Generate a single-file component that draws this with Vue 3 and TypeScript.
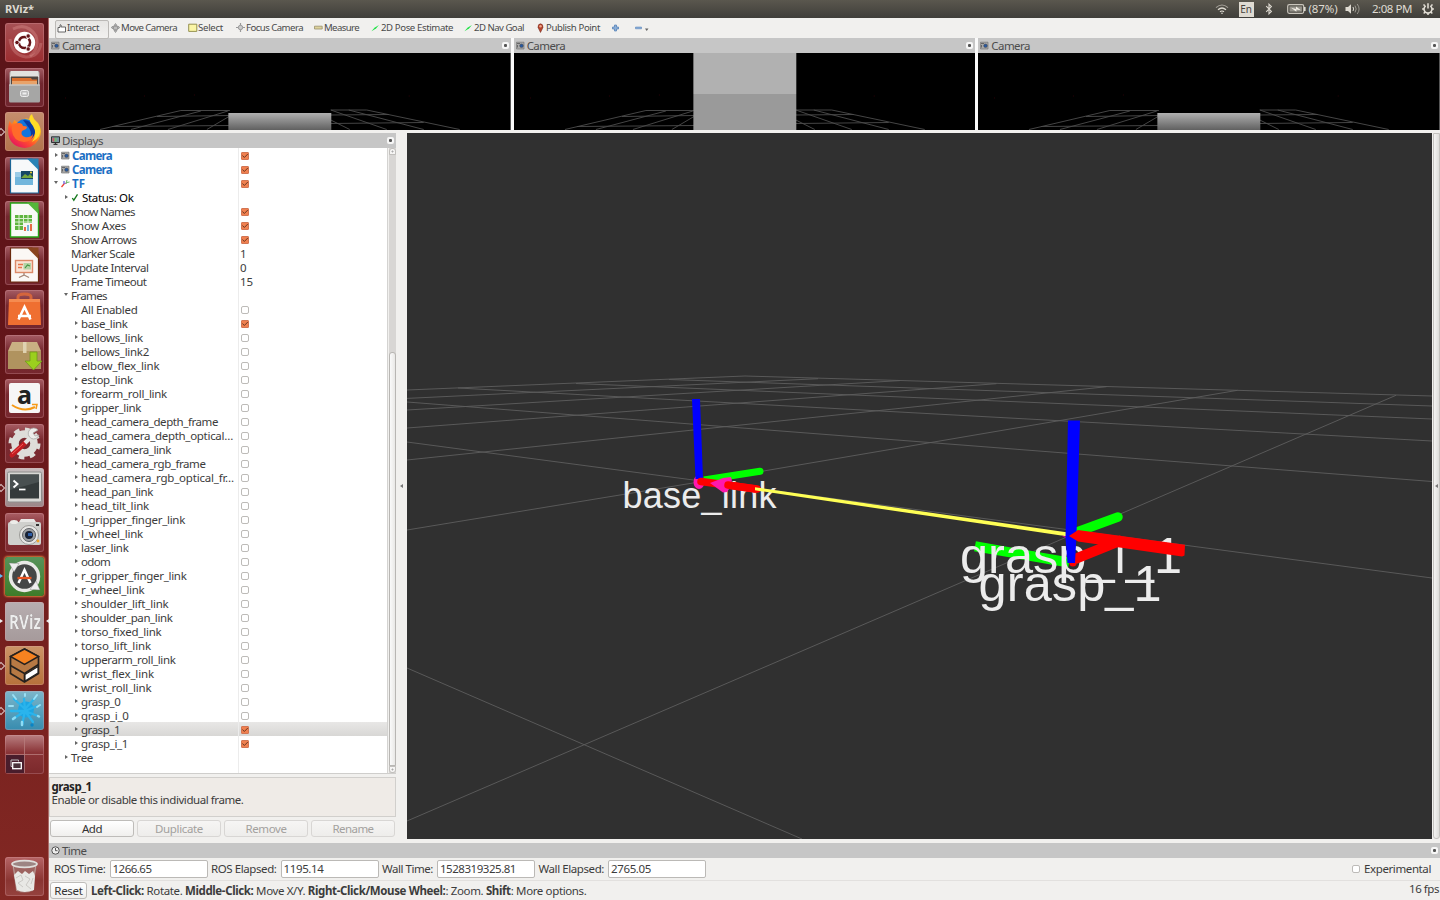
<script setup lang="ts">
interface Tool {
  icon: string
  label: string
  text: number
  slot: number
}

interface Row {
  label: string
  width: number
  depth: number
  arrow?: 'open' | 'closed'
  check?: boolean
  value?: string
  icon?: 'camera' | 'tf' | 'ok'
  kind?: string
}

/* Spreads the letters of a label so that it fills the given width. */
const vFit = {
  mounted(el: HTMLElement, binding: { value: number }) {
    const natural = el.getBoundingClientRect().width
    const count = (el.textContent ?? '').length
    if (count > 0) {
      el.style.letterSpacing = `${((binding.value - natural) / count).toFixed(3)}px`
    }
  },
}

const tools: Tool[] = [
  { icon: 'hand', label: 'Interact', text: 32, slot: 56 },
  { icon: 'move', label: 'Move Camera', text: 56, slot: 77 },
  { icon: 'select', label: 'Select', text: 25, slot: 48 },
  { icon: 'focus', label: 'Focus Camera', text: 57, slot: 78 },
  { icon: 'measure', label: 'Measure', text: 35, slot: 57 },
  { icon: 'arrow', label: '2D Pose Estimate', text: 72, slot: 93 },
  { icon: 'arrow', label: '2D Nav Goal', text: 50, slot: 72 },
  { icon: 'pin', label: 'Publish Point', text: 54, slot: 75 },
]

const frame = (label: string, right: number, check = false): Row => ({
  label,
  width: right - 81,
  depth: 2,
  arrow: 'closed',
  check,
})

const rows: Row[] = [
  { label: 'Camera', width: 40, depth: 0, arrow: 'closed', icon: 'camera', check: true, kind: 'display' },
  { label: 'Camera', width: 40, depth: 0, arrow: 'closed', icon: 'camera', check: true, kind: 'display' },
  { label: 'TF', width: 13, depth: 0, arrow: 'open', icon: 'tf', check: true, kind: 'display' },
  { label: 'Status: Ok', width: 51.5, depth: 1, arrow: 'closed', icon: 'ok', kind: 'ok-row' },
  { label: 'Show Names', width: 64, depth: 1, check: true },
  { label: 'Show Axes', width: 55, depth: 1, check: true },
  { label: 'Show Arrows', width: 65.5, depth: 1, check: true },
  { label: 'Marker Scale', width: 63.5, depth: 1, value: '1' },
  { label: 'Update Interval', width: 77.5, depth: 1, value: '0' },
  { label: 'Frame Timeout', width: 75.5, depth: 1, value: '15' },
  { label: 'Frames', width: 36, depth: 1, arrow: 'open' },
  { label: 'All Enabled', width: 56.5, depth: 2, check: false },
  frame('base_link', 127.5, true),
  frame('bellows_link', 143),
  frame('bellows_link2', 149),
  frame('elbow_flex_link', 159.5),
  frame('estop_link', 133),
  frame('forearm_roll_link', 167),
  frame('gripper_link', 141),
  frame('head_camera_depth_frame', 218),
  frame('head_camera_depth_optical…', 233),
  frame('head_camera_link', 171),
  frame('head_camera_rgb_frame', 205.5),
  frame('head_camera_rgb_optical_fr…', 234),
  frame('head_pan_link', 153),
  frame('head_tilt_link', 149),
  frame('l_gripper_finger_link', 185),
  frame('l_wheel_link', 143),
  frame('laser_link', 128.5),
  frame('odom', 110),
  frame('r_gripper_finger_link', 186.5),
  frame('r_wheel_link', 144.5),
  frame('shoulder_lift_link', 168.5),
  frame('shoulder_pan_link', 172.5),
  frame('torso_fixed_link', 161.5),
  frame('torso_lift_link', 151),
  frame('upperarm_roll_link', 175.5),
  frame('wrist_flex_link', 154),
  frame('wrist_roll_link', 151.5),
  frame('grasp_0', 120.5),
  frame('grasp_i_0', 128.5),
  { ...frame('grasp_1', 120, true), kind: 'selected' },
  frame('grasp_i_1', 128, true),
  { label: 'Tree', width: 22, depth: 1, arrow: 'closed' },
]

const gridLines: number[][] = [
  [407, 668, 802, 839],
  [407, 442, 1432, 578],
  [407, 402, 1432, 481.5],
  [458, 388, 1432, 441],
  [576, 383.5, 1432, 419],
  [669, 379.5, 1432, 406],
  [745, 376, 1432, 396],
  [407, 390, 745, 376],
  [407, 398.4, 818, 378.7],
  [407, 410, 900, 380.6],
  [407, 428, 996.4, 383.7],
  [407, 460, 1106.6, 386.7],
  [407, 530, 699, 482],
  [699, 482, 1237.5, 390.3],
  [407, 821, 1396, 395.3],
]

const floorLines: number[][] = [
  [51, 76.5, 132, 57.5],
  [82, 76.5, 152, 58],
  [119, 76.5, 179, 58],
  [158, 76.5, 181, 63],
  [132, 57.5, 181, 57.5],
  [108, 63.5, 181, 62.5],
  [63, 73.5, 181, 72.5],
  [282, 57, 318, 57],
  [318, 57, 411, 76.5],
  [300, 57, 375, 76.5],
  [282, 57, 338, 76.5],
  [282, 67, 301, 76.5],
  [282, 62, 340, 61.5],
  [282, 70.5, 375, 69.5],
]

const cameras = ['low', 'tall', 'low']

const clocks = [
  { label: 'ROS Time:', text: 51.5, value: '1266.65', digits: 39 },
  { label: 'ROS Elapsed:', text: 65.5, value: '1195.14', digits: 40 },
  { label: 'Wall Time:', text: 51, value: '1528319325.81', digits: 76 },
  { label: 'Wall Elapsed:', text: 65.5, value: '2765.05', digits: 40 },
]

const buttons = [
  { label: 'Add', text: 20, enabled: true },
  { label: 'Duplicate', text: 48, enabled: false },
  { label: 'Remove', text: 41, enabled: false },
  { label: 'Rename', text: 41, enabled: false },
]
</script>

<template>
  <div class="desktop">
    <header class="panel">
      <span v-fit="29" class="app-name">RViz*</span>
      <div class="indicators">
        <svg class="wifi" width="14" height="12" viewBox="0 0 14 12" fill="none" stroke="#dfdbd2" stroke-width="1.2">
          <path d="M1 4.6Q7 -.6 13 4.6" opacity=".6" /><path d="M3 6.8Q7 3.2 11 6.8" /><path d="M5 8.8Q7 7.2 9 8.8" />
          <circle cx="7" cy="10.2" r=".8" fill="#dfdbd2" stroke="none" />
        </svg>
        <span class="lang">En</span>
        <svg class="bt" width="8" height="12" viewBox="0 0 8 12" fill="none" stroke="#dfdbd2" stroke-width="1.1">
          <path d="M1.2 3.2L6.4 8.4L4 10.8V1.2L6.4 3.6L1.2 8.8" />
        </svg>
        <svg class="battery" width="19" height="10" viewBox="0 0 19 10">
          <rect x=".7" y=".7" width="16" height="8.6" rx="1.5" fill="none" stroke="#c9c5bc" stroke-width="1.2" />
          <rect x="17" y="3" width="1.6" height="4" fill="#dfdbd2" />
          <rect x="2.5" y="2.4" width="12.4" height="5.2" fill="#96938b" />
          <path d="M4 3.8L9 5V2.4L13.8 6.2L9.4 5.6V7.8Z" fill="#f3efe6" />
        </svg>
        <span v-fit="29" class="pct">(87%)</span>
        <svg class="sound" width="16" height="12" viewBox="0 0 16 12" fill="none" stroke="#dfdbd2">
          <path d="M.5 4H3L6 1.2V10.8L3 8H.5Z" fill="#dfdbd2" stroke="none" />
          <path d="M8 4Q9.2 6 8 8" /><path d="M10 2.6Q12.4 6 10 9.4" opacity=".55" /><path d="M12.2 1Q16 6 12.2 11" opacity=".5" />
        </svg>
        <span v-fit="40" class="time">2:08 PM</span>
        <svg class="gear" width="12" height="12" viewBox="0 0 12 12" fill="none" stroke="#e6e2d9">
          <path d="M3.7 2.8A4 4 0 1 0 8.3 2.8" stroke-width="1.5" />
          <path d="M6 .2V5.4" stroke-width="1.5" />
          <path d="M2.8 2.8L1.5 1.5M9.2 2.8L10.5 1.5M2 6H.1M10 6H11.9M3 9L1.7 10.4M9 9L10.3 10.4M6 10V12" stroke-width="1.5" />
        </svg>
      </div>
    </header>

    <div class="body">
      <nav class="launcher">
        <div class="tile ubuntu">
          <svg viewBox="0 0 39 39">
            <path d="M8 6Q22 -1 31 13Q35 25 25 33" fill="none" stroke="#e39a98" stroke-width="3" opacity=".35" />
            <path d="M5 16Q7 32 21 34Q34 34 36 20" fill="none" stroke="#e6a3a0" stroke-width="3" opacity=".3" />
            <circle cx="19.500" cy="19.500" r="10.700" fill="#fff" />
            <circle cx="19.500" cy="19.500" r="5.600" fill="none" stroke="#651519" stroke-width="2.500" stroke-dasharray="10.200 1.530" stroke-dashoffset="5.100" />
            <g fill="#651519" stroke="#fff" stroke-width=".8"><circle cx="12" cy="19.500" r="2.200" /><circle cx="23.200" cy="13" r="2.200" /><circle cx="23.200" cy="26" r="2.200" /></g>
          </svg>
        </div>
        <div class="tile">
          <svg viewBox="0 0 39 39">
            <rect x="4.500" y="3" width="30" height="31" rx="2" fill="#b8b8b6" />
            <path d="M6 3H33L34 9H5Z" fill="#e2e2df" />
            <rect x="6" y="8.500" width="27" height="9" fill="#4e4641" />
            <path d="M7 10H26L27 11.500H32V17H7Z" fill="#db6f2d" /><path d="M7 13H32V17H7Z" fill="#e8a36a" />
            <rect x="4" y="16.500" width="31" height="18" rx="1.500" fill="#a6a6a5" /><path d="M4 17H35" stroke="#d5d5d3" />
            <rect x="15.500" y="22.500" width="8" height="6" rx="1.800" fill="#bbb" stroke="#eee" /><rect x="17.500" y="24.500" width="4" height="2" fill="#eee" />
          </svg>
        </div>
        <div class="tile firefox pips">
          <svg viewBox="0 0 39 39">
            <defs><linearGradient id="fox" x1=".85" y1=".05" x2=".2" y2=".95"><stop offset="0" stop-color="#ffe629" /><stop offset=".4" stop-color="#ffa315" /><stop offset=".7" stop-color="#ff4a30" /><stop offset="1" stop-color="#e3155f" /></linearGradient></defs>
            <path d="M4.500 9L7 12L9.500 8L13 11Q20 5 24 7Q24 4 27 2Q28 7 33 11Q37 17 35.500 23Q32 35 20 36Q6 35 3.500 23Q2.500 15 4.500 9Z" fill="url(#fox)" />
            <circle cx="20" cy="17" r="10" fill="#1275dc" />
            <path d="M18 8Q27 8 30 17Q31 25 24 28Q28 22 24 16Z" fill="#0a3aa2" />
            <path d="M9 12Q17 9 18 14Q24 14 21 17L17 19Q15 23 20 25Q25 26 28 22Q28 29 19 30Q8 29 7 19Q6 14 9 12Z" fill="#ff6a2a" />
            <path d="M26 3Q23 9 28 14Q33 22 27 30Q37 25 35 16Q33 10 28 7Z" fill="#ffdc26" />
          </svg>
        </div>
        <div class="tile">
          <svg viewBox="0 0 39 39">
            <path d="M5.500 2H27L33.500 9V36H5.500Z" fill="#f7f9fa" stroke="#1b6596" stroke-width="1.200" /><path d="M22 1.500H33.500V13Z" fill="#2a83b6" />
            <path d="M10 15H28V28H10Z" fill="#72b6dc" /><path d="M10 15H20V20H10Z" fill="#9ccce7" /><rect x="16" y="14" width="12" height="8" fill="#164765" /><path d="M16 21L20 17L23 19L25 17L28 20V21Z" fill="#75a63c" /><circle cx="26" cy="15.500" r="1" fill="#f5d22e" />
          </svg>
        </div>
        <div class="tile">
          <svg viewBox="0 0 39 39">
            <path d="M5.500 2H27L33.500 9V36H5.500Z" fill="#f8faf6" stroke="#26a316" stroke-width="1.400" /><path d="M22 1.500H33.500V13Z" fill="#55b63a" />
            <path d="M10 14H27V29H10Z" fill="#5fb53f" /><path d="M10 17.500H27M10 21H27M10 24.500H27M14 14V29M18.500 14V29M23 14V29" stroke="#dbf0d3" />
            <rect x="18" y="22" width="11" height="8" fill="#f4f6f1" /><path d="M19 30V26H21V30ZM25 30V23H27V30Z" fill="#e66b45" /><path d="M22 30V24H24V30Z" fill="#74b6da" />
          </svg>
        </div>
        <div class="tile">
          <svg viewBox="0 0 39 39">
            <path d="M5.500 2H27L33.500 9V36H5.500Z" fill="#fbf8f5" stroke="#6a2a0d" stroke-width="1.200" /><path d="M22 1.500H33.500V13Z" fill="#8a451f" />
            <rect x="10.500" y="14.500" width="17" height="12" fill="#fae3d4" stroke="#dc8a68" stroke-width="1.400" /><path d="M13 18.500H18M13 21.500H17" stroke="#e6764a" stroke-width="1.500" /><rect x="18.500" y="17" width="7.500" height="6.500" fill="#b3d3a5" /><path d="M20 22L22.500 19L25 20" fill="none" stroke="#3f9440" stroke-width="1.100" /><path d="M19 27V29L14 31.500M19 29L24 31.500" fill="none" stroke="#a58676" stroke-width="1.300" />
          </svg>
        </div>
        <div class="tile">
          <svg viewBox="0 0 39 39">
            <path d="M13 12V7Q13 4 19.500 4Q26 4 26 7V12" fill="none" stroke="#d4653c" stroke-width="3" />
            <path d="M4 9H35L36 35H3Z" fill="#ef6f31" /><path d="M4 9H35V12H4Z" fill="#f58b50" />
            <path d="M13.500 29.500L19.500 17L25.500 29.500M13 26H26" fill="none" stroke="#fff" stroke-width="2.500" />
          </svg>
        </div>
        <div class="tile">
          <svg viewBox="0 0 39 39">
            <path d="M7 7H32L36 16H3Z" fill="#c9b083" /><path d="M3 16H36V34H3Z" fill="#b0935f" /><path d="M18 7H21.500V18H18Z" fill="#dfd2b1" />
            <path d="M25 17H32V26H37L28.500 35L20 26H25Z" fill="#9bcf1e" stroke="#6f991a" stroke-width=".8" />
          </svg>
        </div>
        <div class="tile">
          <svg viewBox="0 0 39 39">
            <rect x="4" y="4" width="31" height="30" rx="2" fill="#f6f6f6" />
            <text x="19.400" y="25" text-anchor="middle" class="amazon">a</text>
            <path d="M7 26Q19 34 30 28" fill="none" stroke="#f69a16" stroke-width="2" /><path d="M27 25.500L32 25.500L31 30" fill="none" stroke="#f69a16" stroke-width="1.500" />
          </svg>
        </div>
        <div class="tile">
          <svg viewBox="0 0 39 39">
            <circle cx="19.500" cy="19.500" r="14" fill="none" stroke="#deddd9" stroke-width="4" stroke-dasharray="5.500 5.500" />
            <circle cx="19.500" cy="19.500" r="9.500" fill="none" stroke="#deddd9" stroke-width="7.500" />
            <path d="M7 31L20 19" stroke="#c41c21" stroke-width="5" stroke-linecap="round" /><path d="M7 30L18 20" stroke="#ee5c59" stroke-width="1" />
            <path d="M20 19L27 12" stroke="#e3e3e1" stroke-width="4" /><path d="M33 6A5.500 5.500 0 1 0 34 11L30 12L28 9Z" fill="#ededeb" stroke="#a3a3a0" stroke-width=".7" />
          </svg>
        </div>
        <div class="tile silver pips">
          <svg viewBox="0 0 39 39">
            <rect x="2.500" y="4" width="34" height="30" rx="1.500" fill="#d8d8d5" stroke="#8e8e8c" /><rect x="5" y="6.500" width="29" height="24" fill="#343a3b" />
            <path d="M5 6.500H34V14L5 22Z" fill="#495051" /><path d="M8.500 12.500L12.500 16L8.500 19.500" fill="none" stroke="#fff" stroke-width="1.900" /><path d="M14 21.500H20.500" stroke="#fff" stroke-width="1.700" />
          </svg>
        </div>
        <div class="tile">
          <svg viewBox="0 0 39 39">
            <rect x="3" y="9" width="33" height="23" rx="2" fill="#cfd0cd" /><path d="M14 9L16 6H29L31 9Z" fill="#e8e8e6" /><ellipse cx="9" cy="9" rx="4" ry="2" fill="#ecece9" />
            <circle cx="24" cy="22" r="9.500" fill="#e6e6e4" stroke="#9b9b98" /><circle cx="24" cy="22" r="6.500" fill="#9da0a3" stroke="#606366" /><circle cx="24" cy="22" r="4" fill="#182235" /><rect x="23" y="20" width="4" height="3" fill="#2d5da6" /><rect x="31" y="11" width="3" height="2" fill="#333" /><circle cx="33" cy="28" r="1.400" fill="#f1a62a" />
          </svg>
        </div>
        <div class="tile updater pips-blue">
          <svg viewBox="0 0 39 39">
            <circle cx="19.500" cy="19.500" r="14" fill="#454746" stroke="#e9e9e6" stroke-width="3.400" />
            <path d="M4 6L14 6.500L9 15Z" fill="#eee" stroke="#777" stroke-width=".4" /><path d="M35 33L25 32.500L31 24Z" fill="#eee" stroke="#777" stroke-width=".4" />
            <path d="M13.500 26L19.500 13L25.500 26" fill="none" stroke="#fff" stroke-width="2.500" /><path d="M12.500 21H26.500" stroke="#e95420" stroke-width="2.300" />
          </svg>
        </div>
        <div class="tile rviz pips-white">
          <svg viewBox="0 0 39 39">
            <text x="20" y="27" text-anchor="middle" textLength="32" lengthAdjust="spacingAndGlyphs" class="rviz-mark">RViz</text>
          </svg>
        </div>
        <div class="tile cube pips">
          <svg viewBox="0 0 39 39">
            <path d="M19.500 3L33.500 10.500V27.500L19.500 36L5.500 27.500V10.500Z" fill="#b77944" stroke="#26211e" stroke-width="1.700" />
            <path d="M19.500 3L33.500 10.500L19.500 18.500L5.500 10.500Z" fill="#f58220" stroke="#26211e" stroke-width="1.500" />
            <path d="M5.500 19.500L19.500 27.500L33.500 18.500M19.500 27.500V36" fill="none" stroke="#26211e" stroke-width="1.700" />
            <path d="M20 28.500L33 20.500V27L20 35Z" fill="#fff" stroke="#26211e" stroke-width="1.200" />
          </svg>
        </div>
        <div class="tile splash pips">
          <svg viewBox="0 0 39 39">
            <circle cx="21" cy="18.500" r="8" fill="#1ba6e4" />
            <path d="M20 18L9 8M20 18L19 8M20 18L30 7M20 20L32 15M20 20L33 25M20 20L28 31M20 20L17 34M20 20L8 28M20 20L6 20" stroke="#2ab4ec" stroke-width="2.300" stroke-linecap="round" />
            <path d="M4 15H8M8 4L11 8M20 3V5M29 8L32 4M32 16L35 14" stroke="#9be0f5" stroke-width="2" stroke-linecap="round" /><path d="M17 31V34M8 28L10 26.500M33 25L34 25.500" stroke="#8ddcf5" stroke-width="2.500" stroke-linecap="round" /><circle cx="27" cy="34" r="1.700" fill="#0984c5" />
          </svg>
        </div>
        <div class="tile spaces">
          <svg viewBox="0 0 39 39">
            <rect x="1" y="20" width="18.500" height="18" fill="#491d2c" /><path d="M19.500 1V38M1 19.500H38" stroke="#b87c7c" stroke-width=".8" />
            <path d="M6 25H13.500V26.500M6 25V31.500H7" fill="none" stroke="#bbb" stroke-width="1" /><rect x="7.700" y="27.700" width="8.600" height="6" fill="#49333a" stroke="#fff" stroke-width="1.300" />
          </svg>
        </div>
        <div class="tile trash">
          <svg viewBox="0 0 39 39">
            <path d="M7 7L11 34Q19 38 28 34L32 7Z" fill="#9d6d69" opacity=".75" /><path d="M8 7L12 34M31 7L27 34" stroke="#c5aeab" stroke-width=".8" />
            <path d="M9 18L13 14L17 17L20 14L24 17L28 14L30 19L29 33Q19 37 12 33Z" fill="#e8e8e5" /><path d="M11 21L16 18L18 23L13 26L18 30M20 19L25 22L21 28L26 32M28 21L26 27" fill="none" stroke="#cbc9c5" />
            <ellipse cx="19.500" cy="7" rx="12.500" ry="3.400" fill="#9d8583" stroke="#e0dedb" stroke-width="1.700" />
          </svg>
        </div>
      </nav>

      <main class="window">
        <div class="toolbar">
          <div
            v-for="(tool, i) in tools"
            :key="tool.label"
            class="tool"
            :class="{ active: i === 0 }"
            :style="{ width: `${tool.slot}px` }"
          >
            <svg width="10" height="10" viewBox="0 0 10 10">
              <path v-if="tool.icon === 'hand'" d="M1 4.500H3V2Q3.500 1.200 4.100 2V4H8.500V9H1Z" fill="#fff" stroke="#555" stroke-width=".9" />
              <g v-else-if="tool.icon === 'move'" fill="#bbb" stroke="#888" stroke-width=".7"><path d="M4.500 .5L6 2.500H3ZM4.500 9.500L6 7.500H3ZM.2 4.500L2.200 3V6ZM8.800 4.500L6.800 3V6Z" /><path d="M2.500 3.500H6.500V6.500H2.500Z" /></g>
              <path v-else-if="tool.icon === 'select'" d="M.7 1.200H8.800V8.400H.7Z" fill="#fbf5a6" stroke="#8b8744" stroke-width=".9" />
              <g v-else-if="tool.icon === 'focus'" fill="none" stroke="#999"><path d="M4.500 0V9M0 4.500H9" stroke-width="1.200" /><circle cx="4.500" cy="4.500" r="2.200" fill="#ccc" /></g>
              <path v-else-if="tool.icon === 'measure'" d="M.5 3.200H8.200V6H.5Z" fill="#ddd29c" stroke="#99916c" stroke-width=".8" />
              <path v-else-if="tool.icon === 'arrow'" d="M.5 8.200L3.500 4.800L7.900 2L5 5.500Z" fill="#1ee244" />
              <g v-else><path d="M4.500 9.500L2 4.500Q1.800 1 4.500 .8Q7.200 1 7 4.500Z" fill="#b5432c" stroke="#6e2b1e" stroke-width=".5" /><circle cx="4.500" cy="3.200" r="1.200" fill="#f1a78e" /></g>
            </svg>
            <span v-fit="tool.text">{{ tool.label }}</span>
          </div>
          <svg class="add-remove" width="38" height="10" viewBox="0 0 38 10">
            <path d="M3.500 2H5.500V4H7.500V6H5.500V8H3.500V6H1.500V4H3.500Z" fill="#8cafd8" stroke="#4f7db4" stroke-width=".7" />
            <path d="M24.500 4H30.500V5.800H24.500Z" fill="#8cafd8" stroke="#4f7db4" stroke-width=".5" /><path d="M34 5.500L37.500 5.500L35.700 8Z" fill="#666" />
          </svg>
        </div>

        <section class="cameras">
          <article v-for="(cam, i) in cameras" :key="i" class="cam">
            <div class="dock-title">
              <svg class="dock-icon" width="9" height="9" viewBox="0 0 9 9"><path d="M.5 1.200H8V8H.5Z" fill="#aaa" stroke="#777" stroke-width=".7" /><path d="M1 2.500H4M1.500 4V6.500" stroke="#555" stroke-width=".8" /><circle cx="5.500" cy="4.800" r="1.800" fill="#2859a1" stroke="#444" stroke-width=".5" /></svg>
              <span v-fit="38.5">Camera</span><i class="close" />
            </div>
            <svg class="cam-view" viewBox="0 0 462 77" preserveAspectRatio="none">
              <defs><linearGradient id="box" x2="0" y2="1"><stop offset="0" stop-color="#b0b0b0" /><stop offset="1" stop-color="#606060" /></linearGradient></defs>
              <rect width="462" height="77" fill="#000" />
              <line v-for="(l, n) in floorLines" :key="n" :x1="l[0]" :y1="l[1]" :x2="l[2]" :y2="l[3]" stroke="#4d4d4d" stroke-width=".9" />
              <rect v-if="cam === 'low'" x="179.500" y="60" width="103" height="17" fill="url(#box)" />
              <g v-else><rect x="179.500" width="103" height="41" fill="#b1b1b1" /><rect x="179.500" y="41" width="103" height="36" fill="#9a9a9a" /></g>
              <path d="M16 45h1M95 43h1M145 42h1M360 43h1" stroke="#2c0008" />
            </svg>
          </article>
        </section>

        <section class="middle">
          <aside class="displays">
            <div class="dock-title">
              <svg class="dock-icon" width="9" height="9" viewBox="0 0 9 9"><path d="M.5 .8H8.500V6.500H.5Z" fill="#7895a0" stroke="#333" /><path d="M1.500 2H3.500V5.500H1.500Z" fill="#c95969" /><path d="M3.500 2H5.500V5.500H3.500Z" fill="#6fb66c" /><path d="M2.500 8.300H6.500M4.500 6.500V8" stroke="#333" stroke-width="1.200" /></svg>
              <span v-fit="41">Displays</span><i class="close" />
            </div>
            <div class="tree-area">
              <div class="tree">
                <div v-for="(row, i) in rows" :key="i" class="row" :class="[`depth-${row.depth}`, row.kind]">
                  <div class="name">
                    <i class="expander" :class="row.arrow" />
                    <svg v-if="row.icon === 'camera'" class="row-icon" width="9" height="9" viewBox="0 0 9 9"><path d="M.5 1.200H8V8H.5Z" fill="#aaa" stroke="#777" stroke-width=".7" /><path d="M1 2.500H4M1.500 4V6.500" stroke="#555" stroke-width=".8" /><circle cx="5.500" cy="4.800" r="1.800" fill="#2859a1" stroke="#444" stroke-width=".5" /></svg>
                    <svg v-else-if="row.icon === 'tf'" class="row-icon" width="9" height="9" viewBox="0 0 9 9" fill="none"><path d="M.5 8L3 5" stroke="#e43" stroke-width="1.300" /><path d="M3 5V2" stroke="#55d" stroke-width="1.200" /><path d="M3 5L6 3.500" stroke="#b4a" stroke-width="1" /><path d="M5 5L6 1M6 3.500L8.500 3" stroke="#6b6" /></svg>
                    <svg v-else-if="row.icon === 'ok'" class="row-icon" width="9" height="9" viewBox="0 0 9 9"><path d="M1.300 5L2.800 7.200L6.500 1.300" fill="none" stroke="#16791e" stroke-width="1.300" /></svg>
                    <span v-fit="row.width">{{ row.label }}</span>
                  </div>
                  <div class="cell">
                    <i v-if="row.check !== undefined" class="box" :class="{ on: row.check }">
                      <svg v-if="row.check" viewBox="0 0 8 8"><path d="M1.500 3.500L3.300 5.500L6.800 2" fill="none" stroke="#6a3722" stroke-width="1" /></svg>
                    </i>
                    <span v-else-if="row.value">{{ row.value }}</span>
                  </div>
                </div>
                <div class="column-rest" />
              </div>
              <div class="scrollbar"><i class="step up" /><i class="thumb" /><i class="step down" /></div>
            </div>
            <div class="help">
              <div><b v-fit="40">grasp_1</b></div>
              <div><span v-fit="192">Enable or disable this individual frame.</span></div>
            </div>
            <div class="buttons">
              <button v-for="b in buttons" :key="b.label" :disabled="!b.enabled"><span v-fit="b.text">{{ b.label }}</span></button>
            </div>
          </aside>
          <div class="splitter"><i /></div>
          <svg class="scene" viewBox="407 133 1025 706">
            <rect x="407" y="133" width="1025" height="706" fill="#303030" />
            <line v-for="(l, n) in gridLines" :key="n" :x1="l[0]" :y1="l[1]" :x2="l[2]" :y2="l[3]" stroke="#5d5d5d" stroke-width=".9" />
            <g class="labels">
              <text x="622.400" y="508.300" font-size="36" textLength="154">base_link</text>
            </g>
            <ellipse cx="699" cy="482" rx="5.500" ry="7" fill="#ff18ad" />
            <path d="M704 480L760 471.200" stroke="#00ff00" stroke-width="7" /><circle cx="760" cy="471.200" r="3.500" fill="#00ff00" />
            <path d="M692 399H700L703 479H695.500Z" fill="#0000ff" />
            <path d="M701 481.500L757 489" stroke="#ff0000" stroke-width="7.500" stroke-linecap="round" />
            <path d="M710 483L723 478L731 477Q734 483 727 492L723 492.500Z" fill="#ff18ad" />
            <path d="M728 485L755 489" stroke="#ff0000" stroke-width="7.500" stroke-linecap="round" />
            <path d="M755 487.300L1068 532.500V536.500L755 490.300Z" fill="#ffff55" />
            <path d="M975 546.300L1069 562.500" stroke="#00ff00" stroke-width="10" />
            <g class="labels">
              <text x="960" y="572.600" font-size="50.500" textLength="222">grasp_i_1</text>
              <text x="978.600" y="600.600" font-size="50.500" textLength="183">grasp_1</text>
            </g>
            <path d="M1077 532L1118 517" stroke="#00ff00" stroke-width="9.500" stroke-linecap="round" />
            <path d="M1075 559L1122 540" stroke="#ff0000" stroke-width="10" />
            <ellipse cx="1073" cy="562" rx="4" ry="4.500" fill="#ff0000" />
            <path d="M1061 535.500L1073 537.500L1069 540Z" fill="#c40b93" />
            <path d="M1068 420.500H1080L1076.500 535L1075 563H1067.500L1065.500 538Z" fill="#0000ff" />
            <path d="M1069 536L1078 530L1185 544.800L1184.500 555.500L1182 556.600L1078 541.500Z" fill="#ff0000" />
          </svg>
          <div class="right-edge"><i /></div>
        </section>

        <section class="time-dock">
          <div class="dock-title">
            <svg class="dock-icon" width="9" height="9" viewBox="0 0 9 9" fill="none" stroke="#444" stroke-width=".9"><circle cx="4.500" cy="4.500" r="3.700" fill="#eee" /><path d="M4.500 2V4.700H6.500" /></svg>
            <span v-fit="24.5">Time</span><i class="close" />
          </div>
          <div class="clocks">
            <label v-for="c in clocks" :key="c.label">
              <span v-fit="c.text">{{ c.label }}</span>
              <span class="field"><span v-fit="c.digits">{{ c.value }}</span></span>
            </label>
            <div class="experimental"><i class="box" /><span v-fit="67">Experimental</span></div>
          </div>
        </section>

        <footer class="status">
          <button class="reset"><span v-fit="28.5">Reset</span></button>
          <span v-fit="495.5" class="hint"><b>Left-Click:</b> Rotate. <b>Middle-Click:</b> Move X/Y. <b>Right-Click/Mouse Wheel:</b>: Zoom. <b>Shift</b>: More options.</span>
          <span v-fit="30" class="fps">16 fps</span>
        </footer>
      </main>
    </div>
  </div>
</template>

<style>
html,
body {
  margin: 0;
  overflow: hidden;
}
</style>

<style scoped>
.desktop {
  width: 1440px;
  height: 900px;
  display: flex;
  flex-direction: column;
  overflow: hidden;
  font-family: "Noto Sans", "Open Sans", sans-serif;
  font-size: 11.5px;
  line-height: 14px;
  color: #3c3c3c;
  white-space: nowrap;
  background: #f1f0ee;
}
.desktop * {
  box-sizing: border-box;
}
span,
b {
  white-space: pre;
}
i {
  display: block;
  flex: none;
}
svg {
  display: block;
  flex: none;
}
.desktop span {
  display: inline-block;
}
.panel {
  height: 18px;
  flex: none;
  display: flex;
  align-items: center;
  justify-content: space-between;
  padding: 0 6px 0 5px;
  background: linear-gradient(#5a574e, #3f3e3a);
  color: #dfdbd2;
}
.app-name {
  font-weight: 700;
  font-size: 11px;
}
.indicators {
  display: flex;
  align-items: center;
}
.wifi {
  margin-right: 10px;
}
.lang {
  width: 15px;
  height: 15px;
  margin-right: 11.5px;
  background: #dfdbd2;
  color: #45433e;
  font-size: 10px;
  line-height: 15px;
  text-align: center;
}
.bt {
  margin-right: 13.5px;
}
.battery {
  margin-right: 3px;
}
.pct {
  margin-right: 7.5px;
}
.sound {
  margin-right: 11px;
}
.time {
  margin-right: 10px;
}
.body {
  flex: 1;
  min-height: 0;
  display: flex;
}
.launcher {
  width: 49px;
  flex: none;
  display: flex;
  flex-direction: column;
  gap: 5.53px;
  padding: 5px 5px 4px;
  border-right: 1px solid #a96a66;
  background: linear-gradient(#5b1419, #621519 35%, #78211f 75%, #822823);
}
.tile {
  position: relative;
  width: 39px;
  height: 39px;
  flex: none;
  border-radius: 3px;
  background: linear-gradient(rgba(220, 150, 160, 0.55), rgba(160, 80, 95, 0.3) 40%, rgba(150, 70, 85, 0.35));
  box-shadow: inset 0 0 0 1px rgba(225, 170, 175, 0.28);
}
.tile svg {
  width: 39px;
  height: 39px;
}
.tile.ubuntu {
  background: linear-gradient(#a75155, #9b2d30);
}
.tile.firefox {
  background: linear-gradient(#c58e6d, #b2744c);
}
.tile.silver {
  background: linear-gradient(#c8bfc0, #9b8788);
}
.tile.updater {
  background: linear-gradient(#57935a, #3e7c29);
  box-shadow: 0 0 2px 1px #d8793c;
}
.tile.rviz {
  background: linear-gradient(#b7aeb0, #a69a9b);
}
.tile.cube {
  background: linear-gradient(#cc9568, #b6713b);
}
.tile.splash {
  background: linear-gradient(#7cb6ca, #388caf);
}
.tile.spaces {
  background: linear-gradient(#b98082, #8a3437 45%, #7b292b);
}
.tile.trash {
  margin-top: auto;
  background: linear-gradient(#b66566, #8a3532 60%, #95423e);
}
.pips::before,
.pips-blue::before,
.pips-white::before,
.pips-white::after {
  content: "";
  position: absolute;
  left: -5px;
  top: 17px;
  border: solid transparent;
  border-width: 2.5px 0 2.5px 3px;
  border-left-color: #eee;
}
.pips::before {
  width: 4px;
  height: 4px;
  left: -7px;
  border: 1px solid #dac2c2;
  transform: rotate(45deg);
}
.pips-blue::before {
  border-left-color: #61bdf0;
}
.pips-white::after {
  left: auto;
  right: -5px;
  border-width: 2.5px 3px 2.5px 0;
  border-color: transparent #eee;
}
.amazon {
  font: 700 25px "Noto Sans", sans-serif;
  fill: #222;
}
.rviz-mark {
  font: 700 19px "Noto Sans", sans-serif;
  fill: #ededed;
  filter: drop-shadow(0.7px 0.8px 0.5px #554d4e);
}
.window {
  flex: 1;
  min-width: 0;
  display: flex;
  flex-direction: column;
}
.toolbar {
  height: 20px;
  flex: none;
  display: flex;
  align-items: center;
  padding-left: 6px;
  font-size: 9.6px;
  color: #4a4a4a;
}
.tool {
  flex: none;
  height: 17px;
  display: flex;
  align-items: center;
}
.tool.active {
  position: relative;
  padding-left: 2px;
}
.tool.active::before {
  content: "";
  position: absolute;
  left: 0;
  top: 0;
  width: 52px;
  height: 17px;
  border: 1px solid #bbb9b6;
  border-radius: 2px;
  background: linear-gradient(#e6e5e3, #f2f1ef);
}
.tool.active > * {
  position: relative;
}
.cameras {
  height: 92px;
  flex: none;
  display: grid;
  grid-template-columns: repeat(3, 1fr);
  gap: 3px;
  background: #fafafa;
}
.cam {
  display: flex;
  flex-direction: column;
}
.dock-title {
  height: 15px;
  flex: none;
  display: flex;
  align-items: center;
  padding: 0 2px;
  line-height: 15px;
  background: #c6c6c6;
  color: #4c4c4c;
}
.dock-title span {
  margin-top: -1px;
}
.dock-icon {
  margin-right: 2px;
}
.close {
  width: 7px;
  height: 7px;
  margin-left: auto;
  border-radius: 2px;
  background: radial-gradient(circle, #555 1.2px, #f6f6f6 2px);
}
.cam-view {
  width: 100%;
  height: 77px;
}
.middle {
  height: 706px;
  margin-top: 3px;
  flex: none;
  display: flex;
}
.displays {
  width: 347px;
  flex: none;
  display: flex;
  flex-direction: column;
}
.tree-area {
  height: 626px;
  flex: none;
  display: flex;
  justify-content: space-between;
  border-bottom: 1px solid #cfcecc;
}
.tree {
  width: 339px;
  display: flex;
  flex-direction: column;
  background: #fff;
  border-right: 1px solid #d4d3d1;
}
.row {
  height: 14px;
  flex: none;
  display: flex;
}
.row.selected {
  background: linear-gradient(#e8e7e6, #d8d7d5);
}
.name {
  width: 190px;
  flex: none;
  display: flex;
  align-items: center;
  padding-top: 1px;
  border-right: 1px solid #ececec;
}
.column-rest {
  flex: 1;
  width: 190px;
  border-right: 1px solid #ececec;
}
.depth-0 .name {
  padding-left: 5px;
}
.depth-1 .name {
  padding-left: 15px;
}
.depth-2 .name {
  padding-left: 25px;
}
.expander {
  width: 7px;
  height: 6px;
}
.expander::before {
  content: "";
  display: block;
  width: 0;
}
.expander.closed::before {
  margin: 0.5px 0 0 0.5px;
  border: solid transparent;
  border-width: 2px 0 2px 3px;
  border-left-color: #666;
}
.expander.open::before {
  border: solid transparent;
  border-width: 3.5px 2px 0;
  border-top-color: #666;
}
.row-icon {
  margin: -1px 2px 0 0;
}
.display .name {
  font-weight: 700;
  color: #1b6fc4;
}
.ok-row .name {
  color: #000;
}
.cell {
  display: flex;
  align-items: center;
  padding: 1px 0 0 1px;
}
.box {
  width: 8px;
  height: 8px;
  margin-left: 1px;
  border: 1px solid #bdbbb8;
  border-radius: 2px;
  background: #fff;
}
.box.on {
  border-color: #d27553;
  border-radius: 1px;
  background: #f0804f;
}
.box svg {
  width: 8px;
  height: 8px;
  margin: -1px;
}
.scrollbar {
  width: 7px;
  display: flex;
  flex-direction: column;
  background: #d8d6d4;
}
.step {
  height: 7px;
  border: 1px solid #c1bfbc;
  border-radius: 3px 3px 0 0;
  background: radial-gradient(circle, #aaa 0.8px, #f6f5f4 1.2px);
}
.step.down {
  border-radius: 0 0 3px 3px;
}
.thumb {
  height: 414px;
  margin-top: auto;
  border: 1px solid #b8b6b3;
  border-radius: 3px 3px 0 0;
  background: linear-gradient(90deg, #fafafa, #e9e8e6);
}
.help {
  height: 40px;
  flex: none;
  margin-top: 3px;
  padding: 2px 1.5px;
  line-height: 13px;
  border: 1px solid #d1cfcc;
  background: #efebe7;
}
.help div {
  height: 13px;
}
.help b {
  display: inline-block;
  color: #222;
}
.buttons {
  display: flex;
  gap: 3px;
  padding: 3px 1px 0;
}
button {
  padding: 0;
  font: inherit;
  color: #333;
  border: 1px solid #bebcb9;
  border-radius: 3px;
  background: linear-gradient(#fff, #f0efed);
}
.buttons button {
  width: 84px;
  height: 17px;
  line-height: 14px;
}
.buttons button:disabled {
  color: #a3a19e;
  border-color: #d8d6d4;
  background: linear-gradient(#f6f5f4, #eeedeb);
}
.splitter {
  width: 11px;
  display: flex;
  align-items: center;
  justify-content: center;
}
.splitter i,
.right-edge i {
  border: solid transparent;
  border-width: 2px 3px 2px 0;
  border-right-color: #777;
}
.scene {
  width: 1025px;
  height: 706px;
}
.labels {
  font-family: "Liberation Sans", Arial, sans-serif;
  fill: #ececec;
}
.right-edge {
  flex: 1;
  margin-left: 1px;
  display: flex;
  align-items: center;
  justify-content: center;
  border: 1px solid #c4c2bf;
  border-radius: 0 0 3px 3px;
  background: linear-gradient(90deg, #f4f3f2, #dedddb);
}
.time-dock {
  height: 38px;
  flex: none;
  margin-top: 4px;
  border-bottom: 1px solid #e2e0de;
}
.clocks {
  height: 22px;
  display: flex;
  align-items: center;
  padding: 0 9px 0 5px;
}
label {
  display: flex;
  align-items: center;
  gap: 4px;
  margin-right: 3.5px;
}
.field {
  width: 98px;
  height: 18px;
  padding-left: 2px;
  line-height: 16px;
  border: 1px solid #bbb9b6;
  border-radius: 2px;
  background: #fff;
}
.experimental {
  margin-left: auto;
  display: flex;
  align-items: center;
  gap: 4px;
}
footer.status {
  flex: 1;
  display: flex;
  align-items: flex-start;
  padding: 1px;
}
.reset {
  width: 37px;
  height: 17px;
  line-height: 14px;
}
.hint {
  margin: 2px 0 0 4px;
}
.fps {
  margin-left: auto;
}
</style>
